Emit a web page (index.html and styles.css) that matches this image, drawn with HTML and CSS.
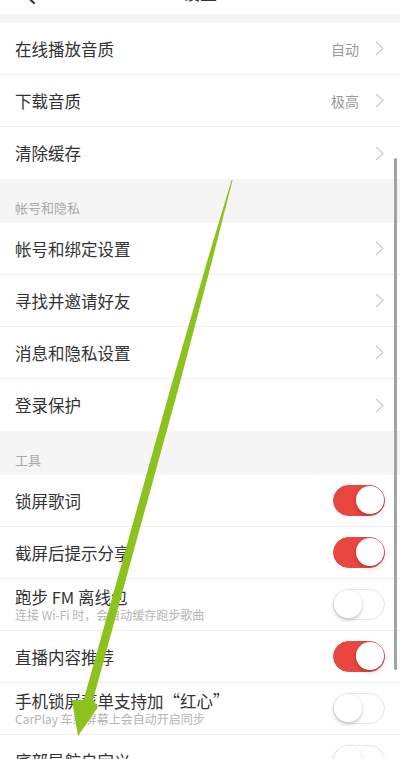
FILE: index.html
```html
<!DOCTYPE html>
<html>
<head>
  <title>设置</title>
  <meta name="viewport" content="width=device-width, initial-scale=1.0">
  <link rel="stylesheet" href="styles.css">
</head>
<body>
  <div class="page">
    <div class="topbar">
      <svg class="back" width="14" height="6" viewBox="0 0 14 6"><polyline points="2,-6 12,3" fill="none" stroke="#333" stroke-width="2" stroke-linecap="round"/></svg>
      <span class="title">设置</span>
    </div>
    <div class="gap"></div>

    <div class="row">
      <span class="label">在线播放音质</span>
      <span class="value">自动</span>
      <svg class="chev" width="9" height="15" viewBox="0 0 9 15"><polyline points="1,1 8,7.5 1,14" fill="none" stroke="#cfcfcf" stroke-width="1.3"/></svg>
    </div>
    <div class="row">
      <span class="label">下载音质</span>
      <span class="value">极高</span>
      <svg class="chev" width="9" height="15" viewBox="0 0 9 15"><polyline points="1,1 8,7.5 1,14" fill="none" stroke="#cfcfcf" stroke-width="1.3"/></svg>
    </div>
    <div class="row last">
      <span class="label">清除缓存</span>
      <svg class="chev" width="9" height="15" viewBox="0 0 9 15"><polyline points="1,1 8,7.5 1,14" fill="none" stroke="#cfcfcf" stroke-width="1.3"/></svg>
    </div>

    <div class="section">帐号和隐私</div>
    <div class="row">
      <span class="label">帐号和绑定设置</span>
      <svg class="chev" width="9" height="15" viewBox="0 0 9 15"><polyline points="1,1 8,7.5 1,14" fill="none" stroke="#cfcfcf" stroke-width="1.3"/></svg>
    </div>
    <div class="row">
      <span class="label">寻找并邀请好友</span>
      <svg class="chev" width="9" height="15" viewBox="0 0 9 15"><polyline points="1,1 8,7.5 1,14" fill="none" stroke="#cfcfcf" stroke-width="1.3"/></svg>
    </div>
    <div class="row">
      <span class="label">消息和隐私设置</span>
      <svg class="chev" width="9" height="15" viewBox="0 0 9 15"><polyline points="1,1 8,7.5 1,14" fill="none" stroke="#cfcfcf" stroke-width="1.3"/></svg>
    </div>
    <div class="row last">
      <span class="label">登录保护</span>
      <svg class="chev" width="9" height="15" viewBox="0 0 9 15"><polyline points="1,1 8,7.5 1,14" fill="none" stroke="#cfcfcf" stroke-width="1.3"/></svg>
    </div>

    <div class="section">工具</div>
    <div class="row">
      <span class="label">锁屏歌词</span>
      <span class="switch on"><span class="knob"></span></span>
    </div>
    <div class="row">
      <span class="label">截屏后提示分享</span>
      <span class="switch on"><span class="knob"></span></span>
    </div>
    <div class="row">
      <div class="label">
        <div class="main">跑步 FM 离线包</div>
        <div class="sub">连接 Wi-Fi 时，会自动缓存跑步歌曲</div>
      </div>
      <span class="switch"><span class="knob"></span></span>
    </div>
    <div class="row">
      <span class="label">直播内容推荐</span>
      <span class="switch on"><span class="knob"></span></span>
    </div>
    <div class="row">
      <div class="label">
        <div class="main">手机锁屏菜单支持加“红心”</div>
        <div class="sub">CarPlay 车载屏幕上会自动开启同步</div>
      </div>
      <span class="switch"><span class="knob"></span></span>
    </div>
    <div class="row">
      <span class="label">底部导航自定义</span>
      <span class="switch"><span class="knob"></span></span>
    </div>

    <div class="scrollbar"></div>

    <!-- green pointer drawn over the list -->
    <svg class="arrow" width="400" height="759" viewBox="0 0 400 759">
      <polygon points="231.6,180 232.6,180 212.3,260 178,390 133.9,550 109.4,640 93,700 98,707 78,736 72,700 83.6,700 100.4,640 125.5,550 170,390 207.5,260" fill="#8cc21d"/>
    </svg>
  </div>
</body>
</html>
```
FILE: styles.css
```css
html, body {
  margin: 0;
  padding: 0;
}

body {
  font-family: "Noto Sans CJK SC", "Noto Sans", sans-serif;
  background-color: #fff;
  color: #333;
  overflow: hidden;
}

.page {
  position: relative;
  width: 400px;
  height: 759px;
  overflow: hidden;
}

.topbar {
  height: 14px;
  overflow: hidden;
  position: relative;
  background-color: #fff;
  text-align: center;
}

.topbar .back {
  position: absolute;
  left: 22px;
  top: 0;
}

.topbar .title {
  display: block;
  font-size: 17px;
  line-height: 20px;
  margin-top: -17px;
  color: #333;
}

.gap {
  height: 9px;
  background-color: #f5f5f5;
}

.row {
  height: 52px;
  display: flex;
  align-items: center;
  padding: 0 15px;
  border-bottom: 1px solid #efefef;
  box-sizing: border-box;
}

.row.last {
  border-bottom: none;
}

.label {
  flex: 1;
  font-size: 16.5px;
  line-height: 20px;
  color: #333;
}

.label .main {
  line-height: 19px;
}

.sub {
  font-size: 12px;
  line-height: 15px;
  color: #b5b5b5;
}

.value {
  font-size: 14px;
  color: #999;
  margin-right: 16px;
}

.chev {
  display: block;
  margin-right: 1px;
}

.section {
  height: 44px;
  box-sizing: border-box;
  padding: 21px 15px 0;
  font-size: 13px;
  line-height: 16px;
  color: #aaa;
  background-color: #f5f5f5;
}

.switch {
  position: relative;
  width: 52px;
  height: 31px;
  border-radius: 16px;
  box-sizing: border-box;
  border: 1.5px solid #e6e6e6;
  background-color: #fff;
}

.switch .knob {
  position: absolute;
  top: 0;
  left: 0;
  width: 28px;
  height: 28px;
  border-radius: 50%;
  background-color: #fff;
  box-shadow: 0 2px 4px rgba(0, 0, 0, 0.22);
}

.switch.on {
  border-color: #e9463f;
  background-color: #e9463f;
}

.switch.on .knob {
  left: auto;
  right: 0;
}

.scrollbar {
  position: absolute;
  right: 3px;
  top: 158px;
  width: 3px;
  height: 512px;
  border-radius: 2px;
  background-color: #a3a3a3;
}

.arrow {
  position: absolute;
  left: 0;
  top: 0;
  pointer-events: none;
}
```
